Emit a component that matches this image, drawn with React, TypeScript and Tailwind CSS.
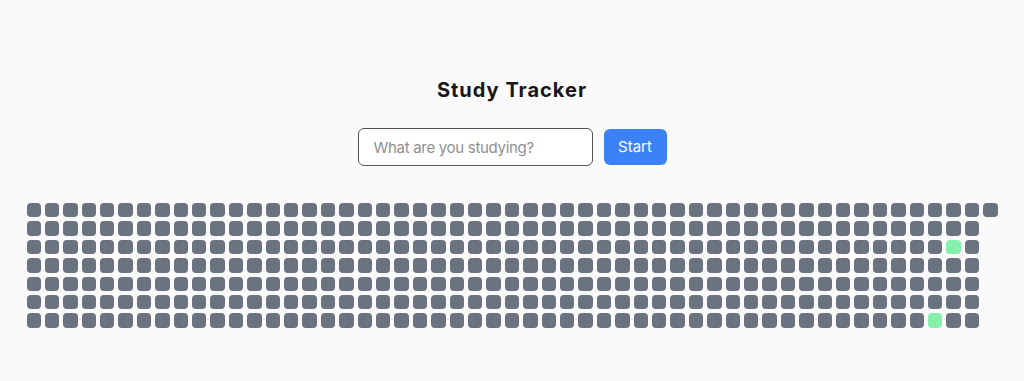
import React from "react";

const GREEN = new Set([352, 349]);

export default function App() {
  const cells = Array.from({ length: 365 }, (_, i) => i);
  return (
    <div
      className="min-h-screen w-full bg-[#fafafa] flex flex-col items-center"
      style={{ fontFamily: "Inter, 'Noto Sans', sans-serif" }}
    >
      <h1 className="mt-[76px] text-[20px] leading-7 font-bold tracking-[0.05em] text-[#171717]">Study Tracker</h1>
      <div className="mt-6 flex items-center gap-[11px]">
        <input
          type="text"
          placeholder="What are you studying?"
          className="w-[235px] h-[38px] rounded-md border border-[#52525b] bg-white px-[15px] text-[15px] tracking-[-0.02em] text-[#171717] placeholder:text-[#8f8f8f] outline-none"
        />
        <button className="h-9 w-[63px] rounded-md bg-[#3b82f6] text-[15px] text-white">Start</button>
      </div>
      <div className="mt-[37px] w-[971px] grid grid-cols-[repeat(53,minmax(0,1fr))] grid-rows-[repeat(7,auto)] grid-flow-col gap-1">
        {cells.map((i) => (
          <div
            key={i}
            className={
              "aspect-square rounded-[4px] " + (GREEN.has(i) ? "bg-[#86efac]" : "bg-[#6b7280]")
            }
          />
        ))}
      </div>
    </div>
  );
}
